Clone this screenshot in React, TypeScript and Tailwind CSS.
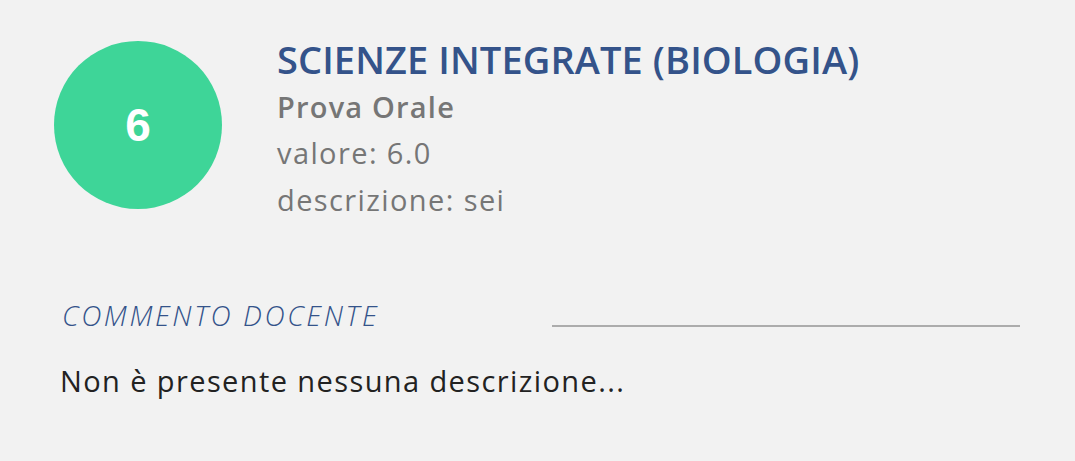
import React from 'react';

const font = { fontFamily: '"Open Sans", "Noto Sans", sans-serif' };

export default function App() {
  return (
    <div className="w-[1075px] h-[461px] bg-[#f2f2f2] overflow-hidden" style={font}>
      <div className="flex items-start pl-[54px] pt-[41px]">
        <div className="w-[168px] h-[168px] rounded-full bg-[#3ed598] flex items-center justify-center shrink-0">
          <span className="text-white font-bold text-[46px] leading-none font-['Liberation_Sans',Arial,sans-serif]">6</span>
        </div>
        <div className="ml-[55px] flex flex-col">
          <div className="text-[#34538a] text-[38px] font-semibold leading-[48px] -mt-[6px] tracking-[0.1px]">
            SCIENZE INTEGRATE (BIOLOGIA)
          </div>
          <div className="text-[#767676] text-[29px] font-semibold leading-[44px] mt-[2px] tracking-[1.2px]">Prova Orale</div>
          <div className="text-[#767676] text-[29px] leading-[46px] mt-[1px] tracking-[1.4px]">valore: 6.0</div>
          <div className="text-[#767676] text-[29px] leading-[46px] mt-[1px] tracking-[1.4px]">descrizione: sei</div>
        </div>
      </div>
      <div className="flex items-end pl-[62px] pr-[55px] mt-[74px]">
        <div className="text-[#34538a] text-[28px] italic font-light leading-[36px] tracking-[2.6px]">
          COMMENTO DOCENTE
        </div>
        <div className="ml-auto w-[468px] h-[2px] bg-[#acacac] mb-[6px]" />
      </div>
      <div className="pl-[60px] mt-[30px] text-[#222222] text-[29px] leading-[36px] tracking-[1.4px]">
        Non è presente nessuna descrizione...
      </div>
    </div>
  );
}
